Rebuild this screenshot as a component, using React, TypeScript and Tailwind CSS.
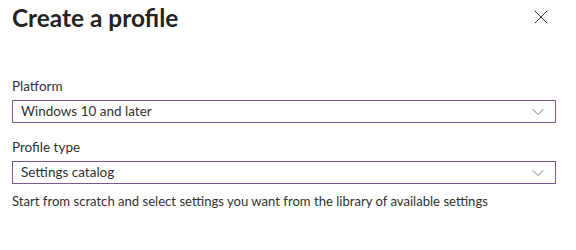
import { X, ChevronDown } from "lucide-react";

const font = { fontFamily: 'Lato, "Open Sans", sans-serif' };

function Dropdown({ label, value }: { label: string; value: string }) {
  return (
    <div className="flex flex-col">
      <label className="text-[13.5px] leading-[18px] text-[#323130] mb-[5px]">{label}</label>
      <div className="flex items-center justify-between h-[23px] border border-[#7b5a8f] px-[8px]">
        <span className="text-[13.5px] text-[#323130]">{value}</span>
        <ChevronDown className="w-[20px] h-[20px] text-[#605e5c] -mr-[1px]" strokeWidth={1} />
      </div>
    </div>
  );
}

export default function App() {
  return (
    <div className="w-[576px] h-[250px] bg-white pl-[12px] pr-[20px]" style={font}>
      <div className="flex items-start justify-between pt-[2px]">
        <h1 className="text-[24.4px] leading-[32px] font-bold text-[#252423]">Create a profile</h1>
        <X className="w-[24px] h-[24px] text-[#323130] mt-[3px] mr-[3px]" strokeWidth={1} />
      </div>
      <div className="mt-[43px] flex flex-col gap-[15px]">
        <Dropdown label="Platform" value="Windows 10 and later" />
        <Dropdown label="Profile type" value="Settings catalog" />
      </div>
      <p className="mt-[8px] text-[13.1px] text-[#323130]">
        Start from scratch and select settings you want from the library of available settings
      </p>
    </div>
  );
}
